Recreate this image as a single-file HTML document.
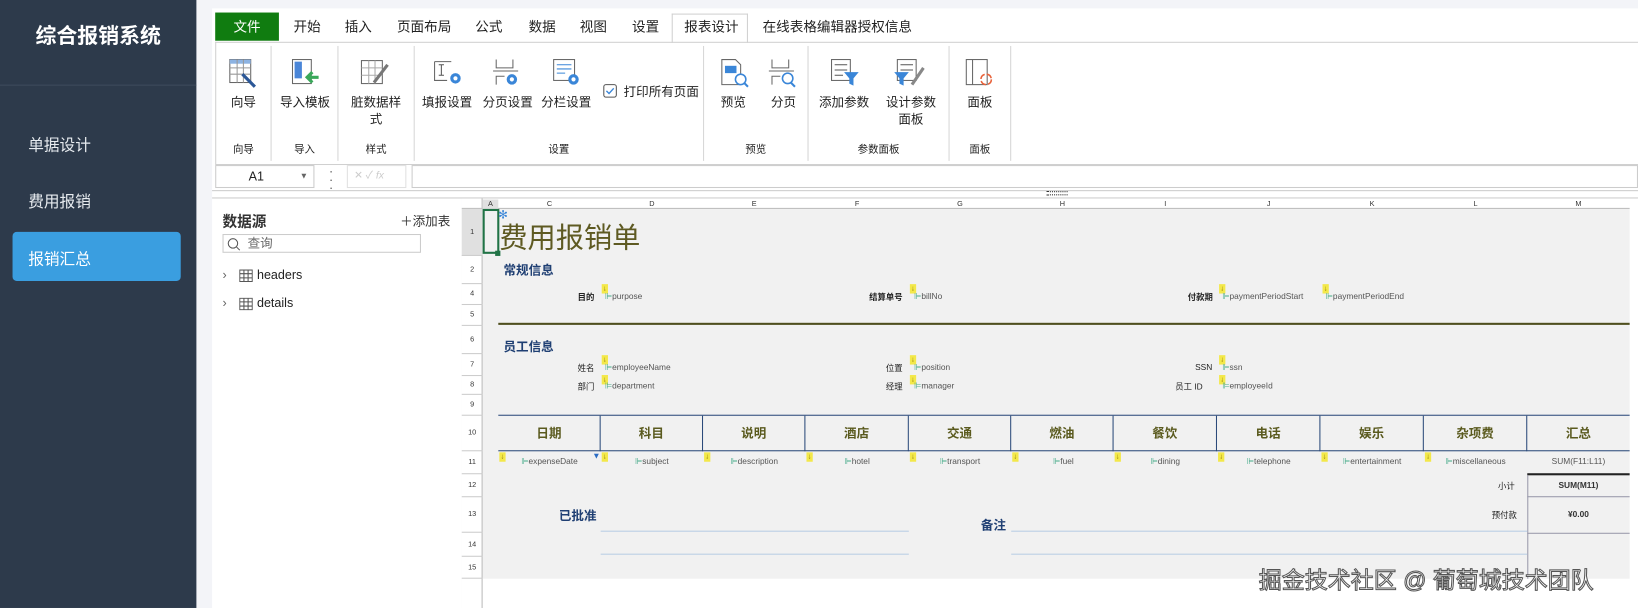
<!DOCTYPE html>
<html><head><meta charset="utf-8">
<style>
*{box-sizing:border-box;margin:0;padding:0}
body{width:1638px;height:582px;overflow:hidden;background:#f3f4f8;font-family:"Liberation Sans","Noto Sans CJK SC",sans-serif;position:relative;font-size:12px;color:#222}
#wrap{position:absolute;left:0;top:0;width:1568px;height:557px;transform:scale(1.04464);transform-origin:0 0}
.a{position:absolute}
#side{left:0;top:0;width:188px;height:582px;background:#2d3a4b}
.nav{color:#e8ecf0;font-size:15px;left:27px}
.tab{top:12px;height:27px;line-height:27px;font-size:13px;color:#222}
.btn{text-align:center;font-size:12px;line-height:16px;color:#222}
.glab{top:134px;font-size:10px;text-align:center;color:#222}
.sep{top:44px;width:1px;height:110px;background:#d6d6d6}
.ch{top:191px;height:9px;font-size:7px;text-align:center;color:#333;line-height:9px}
.rh{left:442px;width:20px;font-size:7px;text-align:center;color:#333;border-bottom:1px solid #ccc}
.lbl{font-size:8px;color:#222;font-weight:bold}
.fld{font-size:8px;color:#555}
.ar{width:6px;height:9px;background:#f3e84a;color:#8a7500;font-size:7px;line-height:9px;text-align:center}
.hd{top:398px;height:34px;line-height:34px;text-align:center;font-size:12px;font-weight:bold;color:#5a5a1e;border-right:1px solid #2b4a7a}
.d11{top:437px;font-size:8px;color:#555;text-align:center}
</style></head><body>
<div id="wrap">
<div id="side" class="a">
 <div class="a" style="left:0;top:20px;width:188px;text-align:center;color:#fff;font-size:20px;font-weight:bold;line-height:30px">综合报销系统</div>
 <div class="a" style="left:0;top:81px;width:188px;height:1px;background:#3e4b5c"></div>
 <div class="a nav" style="top:128px">单据设计</div>
 <div class="a nav" style="top:182px">费用报销</div>
 <div class="a" style="left:12px;top:222px;width:161px;height:47px;background:#3a9ee0;border-radius:4px"></div>
 <div class="a nav" style="top:237px;color:#fff">报销汇总</div>
</div>
<div class="a" style="left:203px;top:8px;width:1435px;height:150px;background:#fff"></div>
<div class="a" style="left:206px;top:12px;width:61px;height:27px;background:#107c10;color:#fff;text-align:center;line-height:27px;font-size:13px">文件</div>
<div class="a tab" style="left:281px">开始</div>
<div class="a tab" style="left:330px">插入</div>
<div class="a tab" style="left:380px">页面布局</div>
<div class="a tab" style="left:455px">公式</div>
<div class="a tab" style="left:506px">数据</div>
<div class="a tab" style="left:555px">视图</div>
<div class="a tab" style="left:605px">设置</div>
<div class="a" style="left:643px;top:13px;width:73px;height:28px;background:#fff;border:1px solid #d0d0d0;border-bottom:none"></div>
<div class="a tab" style="left:655px">报表设计</div>
<div class="a tab" style="left:730px">在线表格编辑器授权信息</div>
<div class="a" style="left:206px;top:40px;width:1432px;height:1px;background:#d0d0d0"></div>
<div class="a" style="left:206px;top:157px;width:1432px;height:1px;background:#d0d0d0"></div>
<div class="a" style="left:206px;top:40px;width:1px;height:117px;background:#d0d0d0"></div>
<div class="a sep" style="left:259px"></div><div class="a sep" style="left:323px"></div><div class="a sep" style="left:396px"></div><div class="a sep" style="left:673px"></div><div class="a sep" style="left:773px"></div><div class="a sep" style="left:908px"></div><div class="a sep" style="left:967px"></div>
<svg class="a" style="left:218px;top:55px" width="30" height="30" viewBox="0 0 30 30"><rect x="2" y="2" width="20" height="22" fill="#fff" stroke="#666"/><rect x="2" y="2" width="20" height="4" fill="#8db3e2"/><path d="M2 10h20M2 16h20M9 2v22M15 2v22" stroke="#999"/><path d="M14 16l12 12" stroke="#2b5797" stroke-width="3"/></svg>
<svg class="a" style="left:277px;top:55px" width="30" height="30"><rect x="3" y="2" width="18" height="23" fill="#fff" stroke="#666"/><rect x="5" y="4" width="7" height="16" fill="#4a86d8"/><path d="M28 19h-10M22 14l-5 5 5 5" stroke="#3aa85a" stroke-width="3" fill="none"/></svg>
<svg class="a" style="left:343px;top:55px" width="30" height="30"><rect x="3" y="3" width="20" height="22" fill="#fff" stroke="#666"/><path d="M3 10h20M3 17h20M10 3v22M16 3v22" stroke="#aaa"/><path d="M28 7L15 24" stroke="#777" stroke-width="3"/></svg>
<svg class="a" style="left:414px;top:55px" width="30" height="30"><path d="M2 4v18h12M2 4h16" stroke="#666" fill="none"/><path d="M6 7h5M8.5 7v10M6 17h5" stroke="#555"/><circle cx="22" cy="20" r="5" fill="#3a86d8"/><circle cx="22" cy="20" r="2" fill="#fff"/></svg>
<svg class="a" style="left:470px;top:55px" width="30" height="30"><path d="M5 2v8h16V2M2 13h24M5 26v-8h8" stroke="#666" fill="none"/><circle cx="20" cy="21" r="5" fill="#3a86d8"/><circle cx="20" cy="21" r="2" fill="#fff"/></svg>
<svg class="a" style="left:528px;top:55px" width="30" height="30"><rect x="2" y="2" width="20" height="20" fill="#fff" stroke="#666"/><path d="M5 7h14M5 11h14M5 15h8" stroke="#3a86d8"/><circle cx="21" cy="21" r="5" fill="#3a86d8"/><circle cx="21" cy="21" r="2" fill="#fff"/></svg>
<svg class="a" style="left:577px;top:80px" width="14" height="14"><rect x="1" y="1" width="12" height="12" rx="2" fill="#fff" stroke="#555"/><path d="M3.5 7l2.5 2.5 4.5-5" stroke="#3a86d8" fill="none" stroke-width="1.3"/></svg>
<svg class="a" style="left:688px;top:55px" width="30" height="30"><path d="M3 2h13l5 5v19H3z" fill="#fff" stroke="#666"/><rect x="6" y="8" width="11" height="7" fill="#3a86d8"/><circle cx="21" cy="21" r="5" fill="#fff" stroke="#3a86d8" stroke-width="1.5"/><path d="M24 24l4 4" stroke="#3a86d8" stroke-width="2"/></svg>
<svg class="a" style="left:734px;top:55px" width="30" height="30"><path d="M5 2v8h16V2M2 13h24M5 26v-8h8" stroke="#666" fill="none"/><circle cx="20" cy="20" r="5" fill="#fff" stroke="#3a86d8" stroke-width="1.5"/><path d="M23 24l4 4" stroke="#3a86d8" stroke-width="2"/></svg>
<svg class="a" style="left:794px;top:55px" width="30" height="30"><rect x="2" y="2" width="18" height="20" fill="#fff" stroke="#666"/><path d="M5 7h12M5 12h12M5 17h8" stroke="#555"/><path d="M14 14h14l-5 6v7l-4-2v-5z" fill="#3a86d8"/></svg>
<svg class="a" style="left:855px;top:55px" width="30" height="30"><rect x="4" y="2" width="18" height="20" fill="#fff" stroke="#666"/><path d="M7 7h12M7 12h12" stroke="#555"/><path d="M1 14h14l-5 6v7l-4-2v-5z" fill="#3a86d8"/><path d="M29 10L18 26" stroke="#888" stroke-width="3"/></svg>
<svg class="a" style="left:923px;top:55px" width="30" height="30"><rect x="2" y="2" width="20" height="24" fill="#fff" stroke="#666"/><path d="M8 2v24" stroke="#666"/><circle cx="21" cy="21" r="5" fill="none" stroke="#e8623a" stroke-width="1.5" stroke-dasharray="6 2"/></svg>
<div class="a btn" style="left:207px;top:90px;width:52px">向导</div>
<div class="a btn" style="left:262px;top:90px;width:60px">导入模板</div>
<div class="a btn" style="left:330px;top:90px;width:60px">脏数据样<br>式</div>
<div class="a btn" style="left:400px;top:90px;width:56px">填报设置</div>
<div class="a btn" style="left:458px;top:90px;width:56px">分页设置</div>
<div class="a btn" style="left:514px;top:90px;width:56px">分栏设置</div>
<div class="a btn" style="left:597px;top:80px;width:72px;text-align:left">打印所有页面</div>
<div class="a btn" style="left:680px;top:90px;width:44px">预览</div>
<div class="a btn" style="left:728px;top:90px;width:44px">分页</div>
<div class="a btn" style="left:779px;top:90px;width:58px">添加参数</div>
<div class="a btn" style="left:840px;top:90px;width:64px">设计参数<br>面板</div>
<div class="a btn" style="left:915px;top:90px;width:46px">面板</div>
<div class="a glab" style="left:207px;width:52px">向导</div>
<div class="a glab" style="left:260px;width:63px">导入</div>
<div class="a glab" style="left:324px;width:72px">样式</div>
<div class="a glab" style="left:397px;width:276px">设置</div>
<div class="a glab" style="left:674px;width:99px">预览</div>
<div class="a glab" style="left:774px;width:134px">参数面板</div>
<div class="a glab" style="left:909px;width:58px">面板</div>
<div class="a" style="left:203px;top:158px;width:1435px;height:24px;background:#fff"></div>
<div class="a" style="left:206px;top:158px;width:95px;height:22px;border:1px solid #ccc;background:#fff;font-size:12px;line-height:20px;padding-left:31px">A1<span style="position:absolute;left:80px;font-size:8px;color:#666">▼</span></div>
<div class="a" style="left:315px;top:160px;font-size:12px;color:#555;line-height:8px">·<br>·<br>·</div>
<div class="a" style="left:332px;top:158px;width:57px;height:22px;border:1px solid #e0e0e0;color:#ccc;font-size:10px;line-height:20px;padding-left:6px">✕ ✓ <i>fx</i></div>
<div class="a" style="left:394px;top:158px;width:1174px;height:22px;border:1px solid #ccc;background:#fff"></div>
<div class="a" style="left:203px;top:182px;width:1365px;height:8px;background:#fff;border-top:1px solid #ccc;border-bottom:1px solid #ccc"></div>
<div class="a" style="left:1002px;top:183px;width:20px;height:4px;border-top:1px dotted #333;border-bottom:1px dotted #333"></div>
<div class="a" style="left:203px;top:190px;width:239px;height:392px;background:#fff"></div>
<div class="a" style="left:213px;top:202px;font-size:14px;font-weight:bold;color:#333">数据源</div>
<div class="a" style="left:383px;top:203px;font-size:12px;color:#333">＋添加表</div>
<div class="a" style="left:213px;top:224px;width:190px;height:18px;border:1px solid #ccc;font-size:12px;line-height:16px;padding-left:23px;color:#666">查询</div>
<svg class="a" style="left:217px;top:227px" width="14" height="14"><circle cx="6" cy="6" r="4.5" fill="none" stroke="#555"/><path d="M9.5 9.5l3 3" stroke="#555"/></svg>
<div class="a" style="left:213px;top:256px;font-size:12px;color:#666">›</div>
<div class="a" style="left:213px;top:283px;font-size:12px;color:#666">›</div>
<svg class="a" style="left:229px;top:258px" width="13" height="12"><rect x=".5" y=".5" width="12" height="11" fill="none" stroke="#555"/><path d="M.5 4h12M.5 8h12M4.5 .5v11M8.5 .5v11" stroke="#555"/></svg>
<svg class="a" style="left:229px;top:285px" width="13" height="12"><rect x=".5" y=".5" width="12" height="11" fill="none" stroke="#555"/><path d="M.5 4h12M.5 8h12M4.5 .5v11M8.5 .5v11" stroke="#555"/></svg>
<div class="a" style="left:246px;top:256px;font-size:12px;color:#222">headers</div>
<div class="a" style="left:246px;top:283px;font-size:12px;color:#222">details</div>
<div class="a" style="left:442px;top:190px;width:1126px;height:392px;background:#fff"></div>
<div class="a" style="left:462px;top:200px;width:1098px;height:354px;background:#f1f1f1"></div>
<div class="a" style="left:442px;top:190px;width:1118px;height:10px;background:#fff;border-bottom:1px solid #bbb"></div>
<div class="a" style="left:461px;top:190px;width:1px;height:392px;background:#bbb"></div>
<div class="a ch" style="left:462px;width:15px;background:#e0e0e0">A</div>
<div class="a ch" style="left:477px;width:98px">C</div><div class="a ch" style="left:575px;width:98px">D</div><div class="a ch" style="left:673px;width:98px">E</div><div class="a ch" style="left:771px;width:99px">F</div><div class="a ch" style="left:870px;width:98px">G</div><div class="a ch" style="left:968px;width:98px">H</div><div class="a ch" style="left:1066px;width:99px">I</div><div class="a ch" style="left:1165px;width:99px">J</div><div class="a ch" style="left:1264px;width:99px">K</div><div class="a ch" style="left:1363px;width:99px">L</div><div class="a ch" style="left:1462px;width:98px">M</div>
<div class="a rh" style="top:200px;height:45px;line-height:45px;background:#e0e0e0">1</div>
<div class="a rh" style="top:245px;height:27px;line-height:27px">2</div>
<div class="a rh" style="top:272px;height:20px;line-height:20px">4</div>
<div class="a rh" style="top:292px;height:20px;line-height:20px">5</div>
<div class="a rh" style="top:312px;height:27px;line-height:27px">6</div>
<div class="a rh" style="top:339px;height:21px;line-height:21px">7</div>
<div class="a rh" style="top:360px;height:18px;line-height:18px">8</div>
<div class="a rh" style="top:378px;height:20px;line-height:20px">9</div>
<div class="a rh" style="top:398px;height:34px;line-height:34px">10</div>
<div class="a rh" style="top:432px;height:22px;line-height:22px">11</div>
<div class="a rh" style="top:454px;height:22px;line-height:22px">12</div>
<div class="a rh" style="top:476px;height:34px;line-height:34px">13</div>
<div class="a rh" style="top:510px;height:23px;line-height:23px">14</div>
<div class="a rh" style="top:533px;height:21px;line-height:21px">15</div>
<div class="a" style="left:462px;top:200px;width:16px;height:43px;border:2px solid #217346"></div>
<div class="a" style="left:474px;top:240px;width:5px;height:5px;background:#217346"></div>
<div class="a" style="left:477px;top:199px;color:#3a86d8;font-size:11px">✻</div>
<div class="a" style="left:478px;top:206px;font-size:27px;color:#5e5a22">费用报销单</div>
<div class="a" style="left:482px;top:250px;font-size:12px;font-weight:bold;color:#1f3f73">常规信息</div>
<div class="a" style="left:482px;top:323px;font-size:12px;font-weight:bold;color:#1f3f73">员工信息</div>
<div class="a" style="left:477px;top:309px;width:1083px;height:2px;background:#4f4f1e"></div>
<div class="a lbl" style="left:553px;top:279px">目的</div><div class="a ar" style="left:576px;top:272px">↓</div><div class="a fld" style="left:579px;top:279px"><span style="color:#4a8">⊫</span>purpose</div>
<div class="a lbl" style="left:832px;top:279px">结算单号</div><div class="a ar" style="left:871px;top:272px">↓</div><div class="a fld" style="left:875px;top:279px"><span style="color:#4a8">⊫</span>billNo</div>
<div class="a lbl" style="left:1137px;top:279px">付款期</div><div class="a ar" style="left:1167px;top:272px">↓</div><div class="a fld" style="left:1170px;top:279px"><span style="color:#4a8">⊫</span>paymentPeriodStart</div>
<div class="a ar" style="left:1266px;top:272px">↓</div><div class="a fld" style="left:1269px;top:279px"><span style="color:#4a8">⊫</span>paymentPeriodEnd</div>
<div class="a fld" style="left:553px;top:347px;color:#222">姓名</div><div class="a ar" style="left:576px;top:340px">↓</div><div class="a fld" style="left:579px;top:347px"><span style="color:#4a8">⊫</span>employeeName</div>
<div class="a fld" style="left:553px;top:365px;color:#222">部门</div><div class="a ar" style="left:576px;top:359px">↓</div><div class="a fld" style="left:579px;top:365px"><span style="color:#4a8">⊫</span>department</div>
<div class="a fld" style="left:848px;top:347px;color:#222">位置</div><div class="a ar" style="left:871px;top:340px">↓</div><div class="a fld" style="left:875px;top:347px"><span style="color:#4a8">⊫</span>position</div>
<div class="a fld" style="left:848px;top:365px;color:#222">经理</div><div class="a ar" style="left:871px;top:359px">↓</div><div class="a fld" style="left:875px;top:365px"><span style="color:#4a8">⊫</span>manager</div>
<div class="a fld" style="left:1144px;top:347px;color:#222">SSN</div><div class="a ar" style="left:1167px;top:340px">↓</div><div class="a fld" style="left:1170px;top:347px"><span style="color:#4a8">⊫</span>ssn</div>
<div class="a fld" style="left:1125px;top:365px;color:#222">员工 ID</div><div class="a ar" style="left:1167px;top:359px">↓</div><div class="a fld" style="left:1170px;top:365px"><span style="color:#4a8">⊫</span>employeeId</div>
<div class="a" style="left:477px;top:397px;width:1083px;height:1px;background:#2b4a7a"></div>
<div class="a" style="left:477px;top:431px;width:1083px;height:1px;background:#2b4a7a"></div>
<div class="a hd" style="left:477px;width:98px">日期</div><div class="a hd" style="left:575px;width:98px">科目</div><div class="a hd" style="left:673px;width:98px">说明</div><div class="a hd" style="left:771px;width:99px">酒店</div><div class="a hd" style="left:870px;width:98px">交通</div><div class="a hd" style="left:968px;width:98px">燃油</div><div class="a hd" style="left:1066px;width:99px">餐饮</div><div class="a hd" style="left:1165px;width:99px">电话</div><div class="a hd" style="left:1264px;width:99px">娱乐</div><div class="a hd" style="left:1363px;width:99px">杂项费</div><div class="a hd" style="left:1462px;width:98px;border-right:none">汇总</div>
<div class="a ar" style="left:478px;top:433px">↓</div><div class="a ar" style="left:576px;top:433px">↓</div><div class="a ar" style="left:674px;top:433px">↓</div><div class="a ar" style="left:772px;top:433px">↓</div><div class="a ar" style="left:871px;top:433px">↓</div><div class="a ar" style="left:969px;top:433px">↓</div><div class="a ar" style="left:1067px;top:433px">↓</div><div class="a ar" style="left:1166px;top:433px">↓</div><div class="a ar" style="left:1265px;top:433px">↓</div><div class="a ar" style="left:1364px;top:433px">↓</div>
<div class="a" style="left:567px;top:432px;color:#2b6cc4;font-size:8px">▼</div>
<div class="a d11" style="left:477px;width:98px"><span style="color:#4a8">⊫</span>expenseDate</div>
<div class="a d11" style="left:575px;width:98px"><span style="color:#4a8">⊫</span>subject</div>
<div class="a d11" style="left:673px;width:98px"><span style="color:#4a8">⊫</span>description</div>
<div class="a d11" style="left:771px;width:99px"><span style="color:#4a8">⊫</span>hotel</div>
<div class="a d11" style="left:870px;width:98px"><span style="color:#4a8">⊫</span>transport</div>
<div class="a d11" style="left:968px;width:98px;text-align:left;padding-left:40px"><span style="color:#4a8">⊫</span>fuel</div>
<div class="a d11" style="left:1066px;width:99px"><span style="color:#4a8">⊫</span>dining</div>
<div class="a d11" style="left:1165px;width:99px"><span style="color:#4a8">⊫</span>telephone</div>
<div class="a d11" style="left:1264px;width:99px"><span style="color:#4a8">⊫</span>entertainment</div>
<div class="a d11" style="left:1363px;width:99px"><span style="color:#4a8">⊫</span>miscellaneous</div>
<div class="a d11" style="left:1462px;width:98px">SUM(F11:L11)</div>
<div class="a" style="left:1462px;top:453px;width:98px;height:2px;background:#222"></div>
<div class="a" style="left:1462px;top:455px;width:1px;height:99px;background:#99a"></div>
<div class="a" style="left:1462px;top:475px;width:98px;height:1px;background:#99a"></div>
<div class="a" style="left:1462px;top:510px;width:98px;height:1px;background:#99a"></div>
<div class="a fld" style="left:1434px;top:460px;color:#222">小计</div>
<div class="a fld" style="left:1462px;top:460px;width:98px;text-align:center;font-weight:bold;color:#333">SUM(M11)</div>
<div class="a fld" style="left:1428px;top:488px;color:#222">预付款</div>
<div class="a fld" style="left:1462px;top:488px;width:98px;text-align:center;font-weight:bold;color:#333">¥0.00</div>
<div class="a" style="left:535px;top:485px;font-size:12px;font-weight:bold;color:#1f3f73">已批准</div>
<div class="a" style="left:939px;top:494px;font-size:12px;font-weight:bold;color:#1f3f73">备注</div>
<div class="a" style="left:575px;top:508px;width:295px;height:1px;background:#b8cde4"></div>
<div class="a" style="left:575px;top:530px;width:295px;height:1px;background:#b8cde4"></div>
<div class="a" style="left:968px;top:508px;width:494px;height:1px;background:#b8cde4"></div>
<div class="a" style="left:968px;top:530px;width:494px;height:1px;background:#b8cde4"></div>
<div class="a" style="left:1205px;top:538px;font-size:22px;color:#fff;-webkit-text-stroke:1px #555;white-space:nowrap">掘金技术社区 @ 葡萄城技术团队</div>
</div>
</body></html>
